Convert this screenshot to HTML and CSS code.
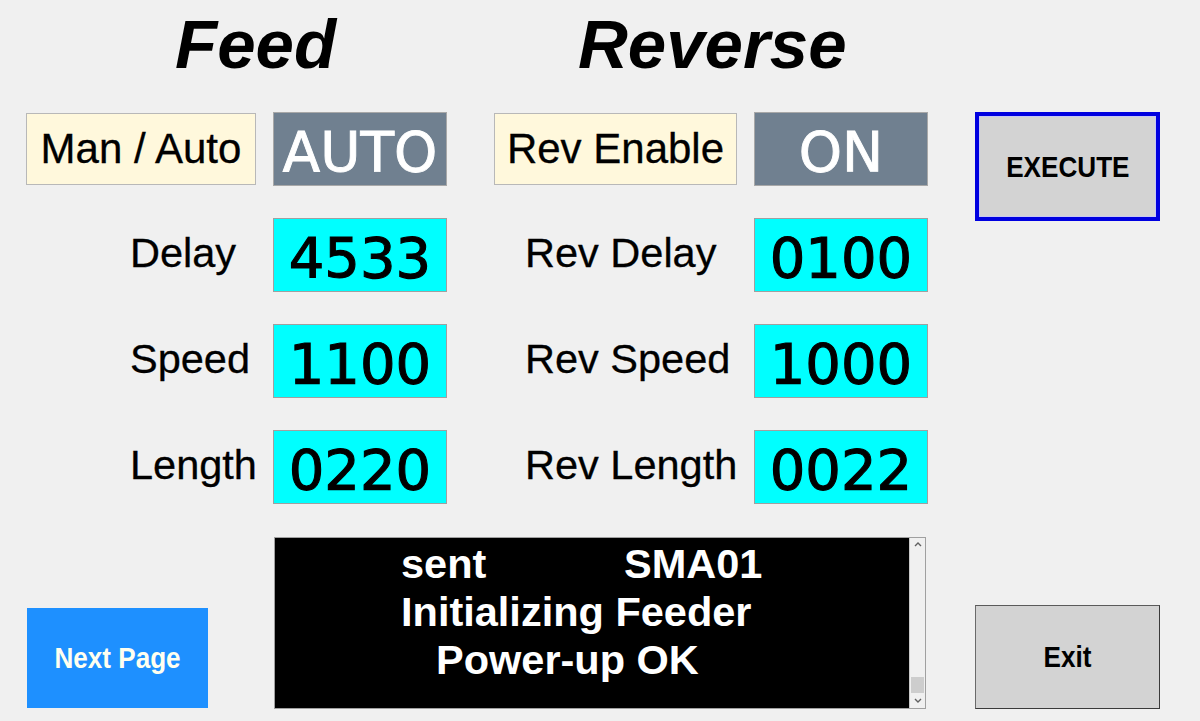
FILE: index.html
```html
<!DOCTYPE html>
<html>
<head>
<meta charset="utf-8">
<link rel="stylesheet" href="styles.css">
</head>
<body>
<main class="screen">
  <h1 class="title title-feed">Feed</h1>
  <h1 class="title title-rev">Reverse</h1>

  <div class="tag tag-feed">Man / Auto</div>
  <div class="state state-feed">AUTO</div>
  <div class="tag tag-rev">Rev Enable</div>
  <div class="state state-rev">ON</div>
  <button class="btn btn-execute"><span class="btn-text">EXECUTE</span></button>

  <div class="label label-feed r2">Delay</div>
  <div class="value vf r2">4533</div>
  <div class="label label-rev r2">Rev Delay</div>
  <div class="value vr r2">0100</div>

  <div class="label label-feed r3">Speed</div>
  <div class="value vf r3">1100</div>
  <div class="label label-rev r3">Rev Speed</div>
  <div class="value vr r3">1000</div>

  <div class="label label-feed r4">Length</div>
  <div class="value vf r4">0220</div>
  <div class="label label-rev r4">Rev Length</div>
  <div class="value vr r4">0022</div>

  <button class="btn btn-next"><span class="btn-text">Next Page</span></button>

  <div class="status">
    <div class="status-text">
      <div class="status-line"><span class="status-word">sent</span><span>SMA01</span></div>
      <div class="status-line">Initializing Feeder</div>
      <div class="status-line indent">Power-up OK</div>
    </div>
    <div class="scrollbar">
      <svg class="arrow" width="14" height="10" viewBox="0 0 14 10"><path d="M4 6 L7 3 L10 6" fill="none" stroke="#606060" stroke-width="1.4"/></svg>
      <div class="track"></div>
      <div class="thumb"></div>
      <svg class="arrow" width="14" height="10" viewBox="0 0 14 10"><path d="M4 4 L7 7 L10 4" fill="none" stroke="#606060" stroke-width="1.4"/></svg>
    </div>
  </div>

  <button class="btn btn-exit"><span class="btn-text">Exit</span></button>
</main>
</body>
</html>
```

FILE: styles.css
```css
html, body {
  margin: 0;
  padding: 0;
  background: #f0f0f0;
}

.screen {
  width: 1200px;
  height: 721px;
  box-sizing: border-box;
  padding-left: 26px;
  display: grid;
  grid-template-columns: 230px 174px 273px 174px 215px;
  grid-template-rows: 80px 74px 74px 74px 74px 173px;
  column-gap: 17px;
  row-gap: 32px;
  font-family: "Liberation Sans", Arial, sans-serif;
}

.title {
  margin: 0;
  padding-top: 5px;
  font-size: 69px;
  font-weight: bold;
  font-style: italic;
  line-height: 80px;
  color: #000;
  grid-row: 1;
  white-space: nowrap;
}
.title-feed { grid-column: 1 / 3; padding-left: 149px; }
.title-rev { grid-column: 3 / 5; padding-left: 114px; }

.tag, .state, .value {
  box-sizing: border-box;
  display: flex;
  align-items: center;
  justify-content: center;
  height: 74px;
}

.tag {
  grid-row: 2;
  height: 72px;
  margin-top: 1px;
  background: #fff8dc;
  border: 1px solid #b8b8b8;
  font-size: 42px;
  color: #000;
  -webkit-text-stroke: 0.3px #000;
  padding-bottom: 1px;
}
.tag-feed { grid-column: 1; }
.tag-rev { grid-column: 3; width: 243px; justify-self: end; }

.state {
  grid-row: 2;
  background: #708090;
  border: 1px solid #a8a8a8;
  color: #fff;
  font-family: "DejaVu Sans", Verdana, sans-serif;
  font-size: 55px;
  padding-top: 5px;
  -webkit-text-stroke: 0.9px #fff;
}
.state-feed { grid-column: 2; }
.state-rev { grid-column: 4; }

.label {
  display: flex;
  align-items: center;
  font-size: 41.5px;
  color: #000;
  white-space: nowrap;
  padding-bottom: 5px;
  -webkit-text-stroke: 0.3px #000;
}
.label-feed { grid-column: 1; padding-left: 104px; }
.label-rev { grid-column: 3; padding-left: 61px; }

.value {
  background: #00ffff;
  border: 1px solid #a0a0a0;
  font-family: "DejaVu Sans", Verdana, sans-serif;
  font-size: 56px;
  color: #000;
  padding-top: 5px;
  -webkit-text-stroke: 1.1px #000;
}
.vf { grid-column: 2; }
.vr { grid-column: 4; }

.r2 { grid-row: 3; }
.r3 { grid-row: 4; }
.r4 { grid-row: 5; }

.btn {
  box-sizing: border-box;
  display: flex;
  align-items: center;
  justify-content: center;
  margin: 0;
  padding: 0;
  font-family: "Liberation Sans", Arial, sans-serif;
  font-weight: bold;
  font-size: 30px;
  cursor: pointer;
}
.btn-text {
  display: inline-block;
  transform: scaleX(0.87);
  white-space: nowrap;
}

.btn-execute {
  grid-column: 5;
  grid-row: 2 / 4;
  justify-self: end;
  align-self: start;
  width: 185px;
  height: 109px;
  background: #d3d3d3;
  border: 4px solid #0000e0;
  box-shadow: inset 0 0 0 1px #c8c8f4;
  color: #000;
}

.btn-next {
  grid-column: 1;
  grid-row: 6;
  align-self: end;
  width: 181px;
  height: 100px;
  margin: 0 0 1px 1px;
  background: #1e90ff;
  border: none;
  color: #fffff0;
}

.btn-exit {
  grid-column: 5;
  grid-row: 6;
  justify-self: end;
  align-self: end;
  width: 185px;
  height: 104px;
  background: #d3d3d3;
  border: 1px solid #3a3a3a;
  border-left-color: #6a6a6a;
  border-top-color: #5a5a5a;
  color: #000;
}

.status {
  grid-column: 2 / 5;
  grid-row: 6;
  margin: 1px 2px 0 1px;
  height: 172px;
  box-sizing: border-box;
  border: 1px solid #a0a0a0;
  display: flex;
}

.status-text {
  flex: 1;
  background: #000;
  color: #fff;
  font-weight: bold;
  font-size: 41.5px;
  line-height: 48px;
  padding: 2px 0 0 126px;
  white-space: nowrap;
}
.status-line { display: flex; }
.status-word { width: 223px; }
.indent { padding-left: 35px; }

.scrollbar {
  width: 15px;
  background: #f0f0f0;
  border-left: 1px solid #c8c8c8;
  display: flex;
  flex-direction: column;
  align-items: center;
}
.arrow { display: block; margin-top: 2px; }
.track { flex: 1; }
.thumb {
  width: 13px;
  height: 16px;
  background: #cdcdcd;
  margin-bottom: 2px;
}
.scrollbar .arrow:last-child { margin: 0 0 3px 0; }
```
